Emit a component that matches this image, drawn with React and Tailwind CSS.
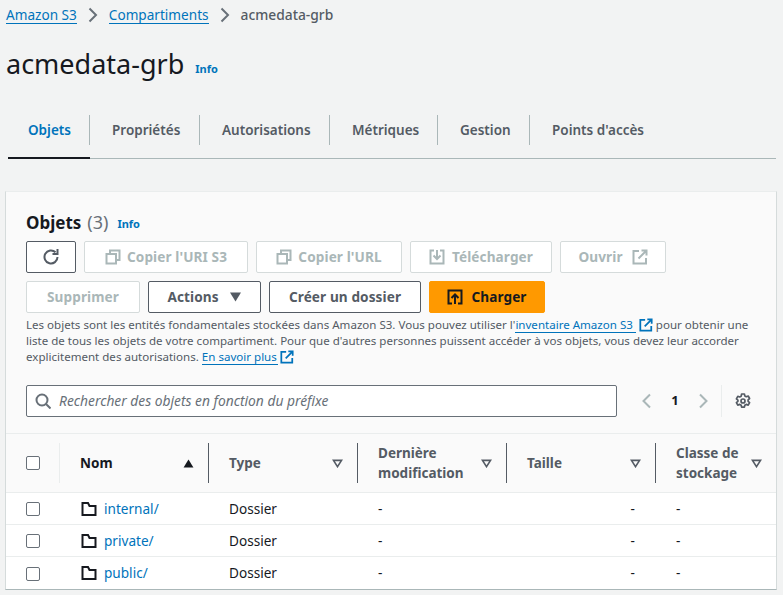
import React from 'react';

const Icon = ({ className = '', children, size = 16 }) => (
  <svg viewBox="0 0 16 16" width={size} height={size} fill="none" stroke="currentColor" strokeWidth="2" className={`shrink-0 ${className}`}>
    {children}
  </svg>
);

const CopyIcon = () => (
  <Icon strokeWidth="1.7" className="mr-[6px]">
    <path d="M5 4.5V1.5h9.5V11H11.5" />
    <rect x="1.5" y="5" width="9.5" height="9.5" />
  </Icon>
);

const DownloadIcon = () => (
  <Icon strokeWidth="1.7" className="mr-[7px]">
    <path d="M5 1.5H1.5v13h13v-13H11" />
    <path d="M8 1v8.5M4.5 6.5 8 10l3.5-3.5" />
  </Icon>
);

const ExternalIcon = ({ className = '' }) => (
  <Icon strokeWidth="2" className={className}>
    <path d="M7 2H1.5v12.5H14V9" />
    <path d="M6.5 9.5 14.5 1.5M9.5 1.5h5v5" />
  </Icon>
);

const FolderIcon = () => (
  <Icon strokeWidth="2" className="text-[#16191f]">
    <path d="M1.5 2H7l1.5 3h6v9h-13z" strokeLinejoin="miter" />
  </Icon>
);

const Caret = ({ filled }) => (
  <svg viewBox="0 0 12 10" width="11" height="9" className="shrink-0 text-[#545b64]">
    {filled ? (
      <path d="M6 0.5 11.5 9.5H0.5z" fill="#16191f" />
    ) : (
      <path d="M1.5 1.5h9L6 8.5z" fill="none" stroke="currentColor" strokeWidth="1.8" />
    )}
  </svg>
);

const Crumb = ({ children }) => (
  <a className="text-[#0073bb] border-b border-[#0073bb] leading-[16px]">{children}</a>
);

const CrumbSep = () => (
  <svg viewBox="0 0 16 16" width="16" height="16" fill="none" stroke="#687078" strokeWidth="2" className="mx-[3px]">
    <path d="M4.5 1.5 11 8l-6.5 6.5" />
  </svg>
);

const tabs = [
  { label: 'Objets', w: 'w-[82px] pl-[20px]' },
  { label: 'Propriétés', w: 'w-[110px] pl-[22px]' },
  { label: 'Autorisations', w: 'w-[130px] pl-[22px]' },
  { label: 'Métriques', w: 'w-[108px] pl-[22px]' },
  { label: 'Gestion', w: 'w-[92px] pl-[22px]' },
  { label: "Points d'accès", w: 'w-[135px] pl-[22px]' },
];

const Button = ({ w, disabled, primary, children }) => {
  let tone = 'bg-white border-[#545b64] text-[#545b64]';
  if (disabled) tone = 'bg-white border-[#d5dbdb] text-[#aab7b8]';
  if (primary) tone = 'bg-[#ff9900] border-[#ff9900] text-[#16191f]';
  return (
    <button className={`${w} ${tone} h-[32px] flex items-center justify-center border rounded-[2px] text-[13.6px] font-bold tracking-[0.1px]`}>
      {children}
    </button>
  );
};

const Checkbox = () => (
  <span className="block w-[14px] h-[14px] bg-white border border-[#687078] rounded-[2px]" />
);

const headerCols = [
  { label: 'Nom', filled: true, dark: true },
  { label: 'Type' },
  { label: <>Dernière<br />modification</> },
  { label: 'Taille' },
  { label: <>Classe de<br />stockage</> },
];

const rows = ['internal/', 'private/', 'public/'];

const App = () => {
  return (
    <div className="w-[783px] h-[595px] overflow-hidden bg-[#f2f3f3] text-[#16191f] font-['Noto_Sans',sans-serif] text-[13.6px]">
      {/* Breadcrumb */}
      <nav className="flex items-center h-[16px] ml-[6px] mt-[7px] text-[13.6px]">
        <Crumb>Amazon S3</Crumb>
        <span className="mx-[5px] flex"><CrumbSep /></span>
        <Crumb>Compartiments</Crumb>
        <span className="mx-[5px] flex"><CrumbSep /></span>
        <span className="text-[#545b64] font-medium text-[13.8px]">acmedata-grb</span>
      </nav>

      {/* Title */}
      <div className="flex items-baseline ml-[6px] mt-[18px] h-[46px]">
        <h1 className="text-[27px] leading-[46px] font-normal">acmedata-grb</h1>
        <a className="ml-[11px] text-[11px] font-bold text-[#0073bb] -translate-y-px">Info</a>
      </div>

      {/* Tabs */}
      <div className="flex ml-[8px] mr-[7px] mt-[18px] h-[54px] pt-[10px] border-b border-[#aab7b8]">
        {tabs.map((tab, i) => (
          <div key={tab.label} className={`${tab.w} h-[44px] ${i === 0 ? 'border-b-2 border-[#16191f]' : ''}`}>
            <div className={`flex items-center h-[30px] ${i < tabs.length - 1 ? 'border-r border-[#aab7b8]' : ''}`}>
              <span className={`text-[13.5px] font-semibold ${i === 0 ? 'text-[#0073bb]' : 'text-[#545b64]'}`}>{tab.label}</span>
            </div>
          </div>
        ))}
      </div>

      {/* Card */}
      <section className="ml-[5px] mt-[32px] w-[772px] h-[399px] bg-[#fafafa] border-x border-b border-t border-t-[#eaeded] border-x-[#d5dbdb] border-b-[#aab7b8]">
        <div className="px-[20px] pt-[19px]">
          <div className="flex items-baseline h-[24px]">
            <h2 className="text-[17px] font-bold leading-[22px]">Objets</h2>
            <span className="ml-[6px] text-[18px] text-[#687078] leading-[22px]">(3)</span>
            <a className="ml-[9px] text-[11px] font-bold text-[#0073bb] -translate-y-px">Info</a>
          </div>

          <div className="flex flex-col gap-[8px] mt-[6px]">
            <div className="flex gap-[8px]">
              <Button w="w-[50px]">
                <svg viewBox="0 0 16 16" width="16" height="16" fill="none" stroke="currentColor" strokeWidth="2">
                  <path d="M14.5 8a6.5 6.5 0 1 1-2-4.7" />
                  <path d="M9.5 5H14.5V0" />
                </svg>
              </Button>
              <Button w="w-[164px]" disabled><CopyIcon />Copier l'URI S3</Button>
              <Button w="w-[146px]" disabled><CopyIcon />Copier l'URL</Button>
              <Button w="w-[142px]" disabled><DownloadIcon />Télécharger</Button>
              <Button w="w-[106px]" disabled>Ouvrir<ExternalIcon className="ml-[9px]" /></Button>
            </div>
            <div className="flex gap-[8px]">
              <Button w="w-[114px]" disabled>Supprimer</Button>
              <Button w="w-[113px]">
                Actions
                <svg viewBox="0 0 12 10" width="13" height="10" className="ml-[10px]"><path d="M0.5 0.5h11L6 9.5z" fill="currentColor" /></svg>
              </Button>
              <Button w="w-[152px]">Créer un dossier</Button>
              <Button w="w-[116px]" primary>
                <svg viewBox="0 0 16 16" width="16" height="16" fill="none" stroke="currentColor" strokeWidth="2" className="mr-[8px]">
                  <path d="M5 14.5H1.5v-13h13v13H11" />
                  <path d="M8 15V6M4.5 9 8 5.5 11.5 9" />
                </svg>
                Charger
              </Button>
            </div>
          </div>

          <p className="mt-[4px] text-[11.55px] leading-[16px] text-[#545b64] whitespace-nowrap">
            Les objets sont les entités fondamentales stockées dans Amazon S3. Vous pouvez utiliser{' '}
            l'<a className="text-[#0073bb] border-b border-[#0073bb] pr-[3px]">inventaire Amazon S3</a>
            <ExternalIcon className="inline-block text-[#0073bb] mx-[3px] align-[-3px] !w-[14px] !h-[14px]" />
            pour obtenir une<br />
            liste de tous les objets de votre compartiment. Pour que d'autres personnes puissent accéder à vos objets, vous devez leur accorder<br />
            explicitement des autorisations.{' '}
            <a className="text-[#0073bb] border-b border-[#0073bb] pr-[1px]">En savoir plus</a>
            <ExternalIcon className="inline-block text-[#0073bb] ml-[2px] align-[-3px] !w-[14px] !h-[14px]" />
          </p>

          {/* Search + pager */}
          <div className="flex items-center mt-[20px] h-[32px]">
            <div className="w-[591px] h-[32px] flex items-center bg-white border border-[#687078] rounded-[2px] pl-[8px]">
              <svg viewBox="0 0 16 16" width="16" height="16" fill="none" stroke="#687078" strokeWidth="2" className="shrink-0">
                <circle cx="7" cy="7" r="5.5" />
                <path d="M11 11l4.5 4.5" />
              </svg>
              <span className="ml-[8px] text-[13.8px] italic text-[#687078]">Rechercher des objets en fonction du préfixe</span>
            </div>
            <svg viewBox="0 0 16 16" width="16" height="16" fill="none" stroke="#aab7b8" strokeWidth="2" className="ml-[22px]"><path d="M11 1.5 4.5 8l6.5 6.5" /></svg>
            <span className="w-[40px] text-center text-[13px] font-bold">1</span>
            <svg viewBox="0 0 16 16" width="16" height="16" fill="none" stroke="#aab7b8" strokeWidth="2"><path d="M5 1.5 11.5 8 5 14.5" /></svg>
            <div className="w-px h-[32px] bg-[#eaeded] ml-[10px]" />
            <svg viewBox="0 0 16 16" width="16" height="16" fill="none" stroke="#545b64" strokeWidth="1.7" className="ml-[13px]">
              <path d="M6.6 1h2.8l.4 1.9 1.5.8 1.9-.7 1.4 2.5-1.5 1.3v1.5l1.5 1.3-1.4 2.5-1.9-.7-1.5.8-.4 1.9H6.6l-.4-1.9-1.5-.8-1.9.7-1.4-2.5 1.5-1.3V7.1L1.4 5.8l1.4-2.5 1.9.7 1.5-.8z" strokeLinejoin="round" />
              <circle cx="8" cy="8" r="2" />
            </svg>
          </div>
        </div>

        {/* Table */}
        <div className="mt-[16px] border-t border-[#eaeded]">
          <div className="grid grid-cols-[54px_149px_149px_149px_149px_1fr] h-[59px] border-b border-[#eaeded] items-center">
            <div className="h-[40px] flex items-center pl-[20px] border-r border-[#eaeded]">
              <Checkbox />
            </div>
            {headerCols.map((col, i) => (
              <div
                key={i}
                className={`h-[40px] flex items-center justify-between pl-[20px] pr-[14px] ${i === 4 ? '' : 'border-r border-[#545b64]'} text-[13.5px] leading-[20px] font-bold ${col.dark ? 'text-[#16191f]' : 'text-[#545b64]'}`}
              >
                <span>{col.label}</span>
                <Caret filled={col.filled} />
              </div>
            ))}
          </div>
          {rows.map((name, i) => (
            <div
              key={name}
              className={`grid grid-cols-[54px_149px_149px_149px_149px_1fr] h-[32px] pt-[1px] items-center bg-white ${i < rows.length - 1 ? 'border-b border-[#eaeded]' : ''}`}
            >
              <div className="pl-[20px]"><Checkbox /></div>
              <div className="flex items-center pl-[21px]">
                <FolderIcon />
                <a className="ml-[7px] text-[#0073bb]">{name}</a>
              </div>
              <div className="pl-[20px]">Dossier</div>
              <div className="pl-[20px]">-</div>
              <div className="text-right pr-[21px]">-</div>
              <div className="pl-[20px]">-</div>
            </div>
          ))}
        </div>
      </section>
    </div>
  );
};

export default App;
